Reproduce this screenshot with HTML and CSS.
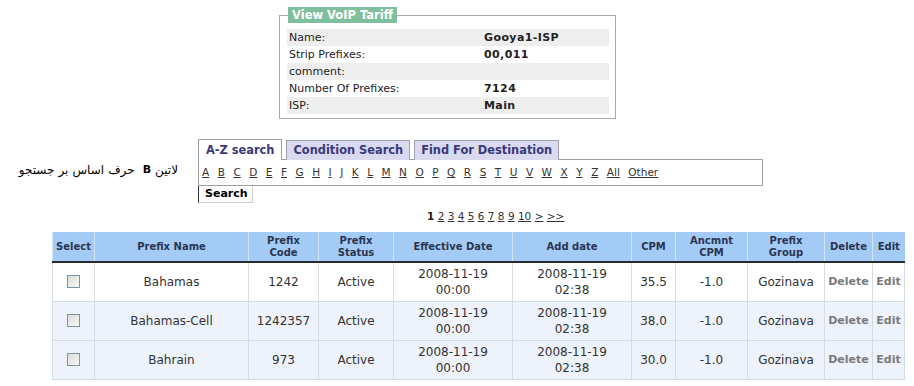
FILE: index.html
```html
<!DOCTYPE html>
<html lang="en">
<head>
    <meta charset="UTF-8">
    <title>View VoIP Tariff</title>
    <link rel="stylesheet" href="styles.css">
</head>
<body>
    <fieldset class="tariff">
        <legend>View VoIP Tariff</legend>
        <table class="info">
            <tr class="shade"><td class="label">Name:</td><td class="value">Gooya1-ISP</td></tr>
            <tr><td class="label">Strip Prefixes:</td><td class="value">00,011</td></tr>
            <tr class="shade"><td class="label">comment:</td><td class="value"></td></tr>
            <tr><td class="label">Number Of Prefixes:</td><td class="value">7124</td></tr>
            <tr class="shade"><td class="label">ISP:</td><td class="value">Main</td></tr>
        </table>
    </fieldset>

    <div class="search-row">
        <div class="az-label">
            <span lang="fa">جستجو</span><span lang="fa">بر</span><span lang="fa">اساس</span><span lang="fa">حرف</span><b>B</b><span lang="fa">لاتین</span>
        </div>
        <div class="search-box">
            <div class="tabs">
                <span class="tab active">A-Z search</span>
                <span class="tab">Condition Search</span>
                <span class="tab">Find For Destination</span>
            </div>
            <div class="letters">
                <a href="#">A</a><a href="#">B</a><a href="#">C</a><a href="#">D</a><a href="#">E</a><a href="#">F</a><a href="#">G</a><a href="#">H</a><a href="#">I</a><a href="#">J</a><a href="#">K</a><a href="#">L</a><a href="#">M</a><a href="#">N</a><a href="#">O</a><a href="#">P</a><a href="#">Q</a><a href="#">R</a><a href="#">S</a><a href="#">T</a><a href="#">U</a><a href="#">V</a><a href="#">W</a><a href="#">X</a><a href="#">Y</a><a href="#">Z</a><a href="#">All</a><a href="#">Other</a>
            </div>
            <div class="search-btn">Search</div>
        </div>
    </div>

    <div class="pager">
        <b>1</b> <a href="#">2</a> <a href="#">3</a> <a href="#">4</a> <a href="#">5</a> <a href="#">6</a> <a href="#">7</a> <a href="#">8</a> <a href="#">9</a> <a href="#">10</a> <a href="#">&gt;</a> <a href="#">&gt;&gt;</a>
    </div>

    <table class="prefixes">
        <colgroup>
            <col class="c-select"><col class="c-name"><col class="c-code"><col class="c-status">
            <col class="c-date"><col class="c-date"><col class="c-cpm"><col class="c-ancmnt">
            <col class="c-group"><col class="c-delete"><col class="c-edit">
        </colgroup>
        <thead>
            <tr>
                <th>Select</th>
                <th>Prefix Name</th>
                <th>Prefix<br>Code</th>
                <th>Prefix<br>Status</th>
                <th>Effective Date</th>
                <th>Add date</th>
                <th>CPM</th>
                <th>Ancmnt<br>CPM</th>
                <th>Prefix<br>Group</th>
                <th>Delete</th>
                <th>Edit</th>
            </tr>
        </thead>
        <tbody>
            <tr>
                <td><span class="check"></span></td>
                <td>Bahamas</td>
                <td>1242</td>
                <td>Active</td>
                <td>2008-11-19<br>00:00</td>
                <td>2008-11-19<br>02:38</td>
                <td>35.5</td>
                <td>-1.0</td>
                <td>Gozinava</td>
                <td class="action">Delete</td>
                <td class="action">Edit</td>
            </tr>
            <tr class="alt">
                <td><span class="check"></span></td>
                <td>Bahamas-Cell</td>
                <td>1242357</td>
                <td>Active</td>
                <td>2008-11-19<br>00:00</td>
                <td>2008-11-19<br>02:38</td>
                <td>38.0</td>
                <td>-1.0</td>
                <td>Gozinava</td>
                <td class="action">Delete</td>
                <td class="action">Edit</td>
            </tr>
            <tr class="alt">
                <td><span class="check"></span></td>
                <td>Bahrain</td>
                <td>973</td>
                <td>Active</td>
                <td>2008-11-19<br>00:00</td>
                <td>2008-11-19<br>02:38</td>
                <td>30.0</td>
                <td>-1.0</td>
                <td>Gozinava</td>
                <td class="action">Delete</td>
                <td class="action">Edit</td>
            </tr>
        </tbody>
    </table>
</body>
</html>
```

FILE: styles.css
```css
* {
    box-sizing: border-box;
}

body {
    margin: 0;
    background: #fff;
    color: #222;
    font-family: "DejaVu Sans", Verdana, sans-serif;
    font-size: 11px;
}

/* tariff summary */
.tariff {
    width: 337px;
    margin: 7px 0 0 279px;
    padding: 6px 6px 4px 7px;
    border: 1px solid #a8a8a8;
}

.tariff legend {
    background: #7fbf9d;
    color: #fff;
    font-weight: bold;
    font-size: 11.5px;
    line-height: 16px;
    padding: 0 4px;
    margin-left: 1px;
}

.info {
    width: 100%;
    border-collapse: collapse;
}

.info td {
    height: 17px;
    padding: 0 2px;
    font-size: 11px;
    color: #222;
}

.info .shade td {
    background: #eeeeee;
}

.info .label {
    width: 195px;
}

.info .value {
    font-weight: bold;
    letter-spacing: 0.4px;
}

/* A-Z search block */
.search-row {
    display: flex;
    align-items: flex-start;
    margin-top: 20px;
}

.az-label {
    display: flex;
    justify-content: flex-end;
    gap: 4px;
    width: 178px;
    margin-top: 24px;
    margin-right: 20px;
    font-size: 12px;
    color: #000;
}

.az-label b {
    font-size: 11px;
    margin: 0 0 0 4px;
}

.search-box {
    width: 565px;
}

.tabs {
    display: flex;
    gap: 4px;
    height: 21px;
    position: relative;
    z-index: 1;
}

.tab {
    display: block;
    padding: 0 6px;
    line-height: 19px;
    font-size: 11.4px;
    font-weight: bold;
    color: #3a3a78;
    background: #d9d9f0;
    border: 1px solid #a0a0b8;
    border-bottom: none;
    height: 20px;
    margin-top: 1px;
}

.tab.active {
    background: #fff;
    border-color: #a0a0a0;
    height: 21px;
    margin-top: 0;
    line-height: 20px;
    padding: 0 7px;
}

.letters {
    border: 1px solid #a0a0a0;
    height: 27px;
    padding: 6px 0 0 3px;
    margin-top: -1px;
}

.letters a {
    color: #333;
    font-size: 10.5px;
    margin-right: 8.5px;
}

.search-btn {
    width: 55px;
    height: 17px;
    border-left: 1px solid #333;
    border-right: 1px solid #ccc;
    border-bottom: 1px solid #ccc;
    padding-left: 6px;
    line-height: 16px;
    font-weight: bold;
    font-size: 11px;
    color: #000;
}

/* paging */
.pager {
    margin: 7px 0 0 427px;
    font-size: 10.5px;
    color: #222;
    height: 22px;
}

.pager a {
    color: #333;
}

/* prefix table */
.prefixes {
    margin-left: 52px;
    width: 853px;
    border-collapse: collapse;
    table-layout: fixed;
}

.c-select { width: 42px; }
.c-name { width: 154px; }
.c-code { width: 70px; }
.c-status { width: 75px; }
.c-date { width: 119px; }
.c-cpm { width: 44px; }
.c-ancmnt { width: 72px; }
.c-group { width: 77px; }
.c-delete { width: 48px; }
.c-edit { width: 32px; }

.prefixes th {
    background: #a3cbf5;
    color: #2b3552;
    font-size: 10px;
    font-weight: bold;
    line-height: 12px;
    height: 30px;
    border-left: 1px solid #d2e4f8;
    border-bottom: 2px solid #2a2a2a;
    padding: 0 2px;
}

.prefixes td {
    text-align: center;
    font-size: 12px;
    line-height: 16px;
    color: #333;
    padding: 3px 2px;
    border: 1px solid #d5dbe3;
}

.prefixes .alt td {
    background: #eef2fa;
}

.prefixes .action {
    font-size: 11px;
    font-weight: bold;
    color: #7a7a7a;
}

.check {
    display: inline-block;
    width: 13px;
    height: 13px;
    border: 1px solid #7f92ac;
    background: linear-gradient(135deg, #dcdcd8, #f8f8f6);
    vertical-align: middle;
    margin-top: -3px;
}
```
